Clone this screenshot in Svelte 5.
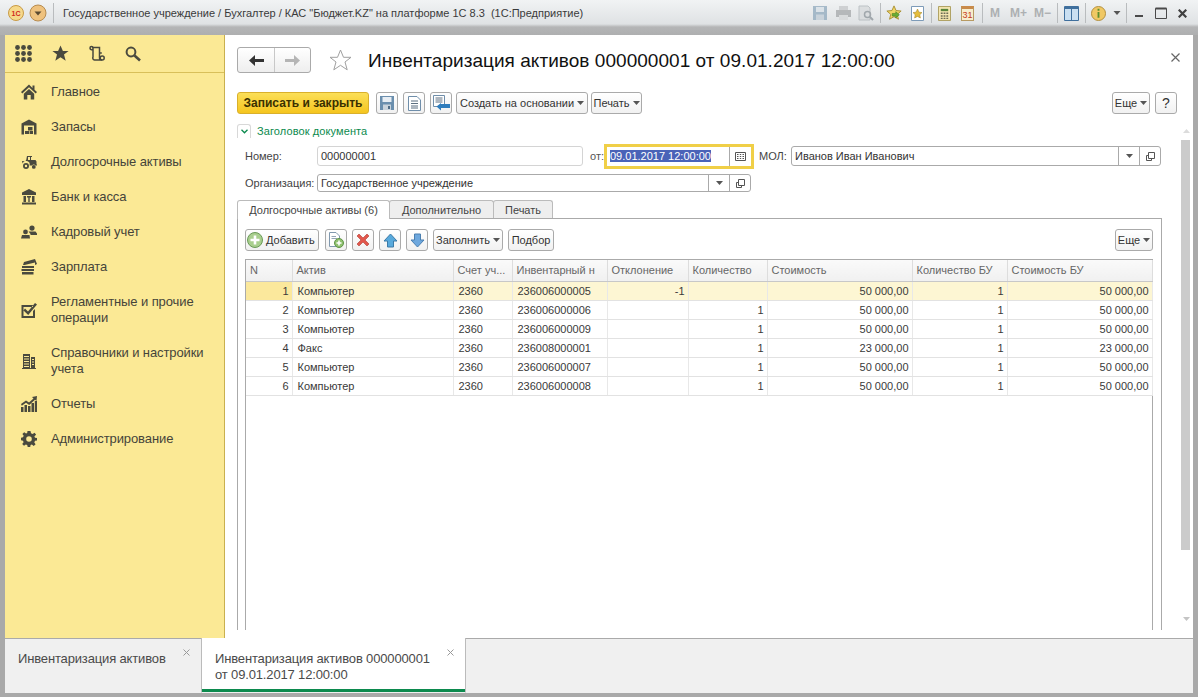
<script>
  const menu = [
    { label: 'Главное', icon: 'home' },
    { label: 'Запасы', icon: 'store' },
    { label: 'Долгосрочные активы', icon: 'tractor' },
    { label: 'Банк и касса', icon: 'bank' },
    { label: 'Кадровый учет', icon: 'people' },
    { label: 'Зарплата', icon: 'money' },
    { label: 'Регламентные и прочие операции', icon: 'check', tall: true },
    { label: 'Справочники и настройки учета', icon: 'book', tall: true },
    { label: 'Отчеты', icon: 'chart' },
    { label: 'Администрирование', icon: 'gear' }
  ];

  const paths = {
    home: 'M8 .5 0 8l1.3 1.4L8 3.2l6.7 6.2L16 8l-2.5-2.3V1.5h-2v2.4ZM8 5 2.8 9.8V15.5H6.3V11h3.4v4.5h3.5V9.8Z',
    store: 'M8 .5 .5 4.5V15.5H15.5V4.5ZM3 6.5H13V15.5H3ZM7 8H11.5V11.5H7ZM4 12H8V15H4ZM8.6 12H12V15H8.6Z',
    tractor: 'M6 2H11V3H10V6H14.5L15.5 7.5V10.5H16V11.5H14.5A2 2 0 0 0 11 11.5H8.5A3.5 3.5 0 0 0 1.6 9.5L1 7H5ZM7 3V6H9V3ZM5 9A3 3 0 1 1 5 15 3 3 0 1 1 5 9ZM5 10.8A1.2 1.2 0 1 0 5 13.2 1.2 1.2 0 1 0 5 10.8ZM12.8 11A1.9 1.9 0 1 1 12.8 14.8 1.9 1.9 0 1 1 12.8 11Z',
    bank: 'M8 0 1 3.5V6H15V3.5ZM2.5 7H5V13H2.5ZM6 7H10V8.5H8.7V13H7.3V8.5H6ZM11 7H13.5V13H11ZM1 13.5H15V15.5H1Z',
    people: 'M11 1.5A2.6 2.6 0 1 1 11 6.7 2.6 2.6 0 1 1 11 1.5ZM7.5 7.5H14.5L16 9.5V11H9.5V10ZM4.5 5.5A2.4 2.4 0 1 1 4.5 10.3 2.4 2.4 0 1 1 4.5 5.5ZM1 11H8.5L9 14.5H0Z',
    money: 'M3 3 14 0l2 5-2 1V3.5L3.5 6H2ZM1 7H13V9H1ZM.5 10H13V12H.5ZM1 13H12.5V15.5H1Z',
    check: 'M.5 3H12V5H2.5V14H12V9L14 7V16H.5ZM4 6.5 7 9.5 14 1 16 2.5 7.2 13 2.5 8.5Z',
    book: 'M2 1H9V15H2ZM10 4H14V15H10ZM3 3V4H8V3ZM3 5.5V6.5H8V5.5ZM3 8V9H8V8ZM3 10.5V11.5H8V10.5ZM3 13V14H8V13ZM11 6V7H13V6ZM11 8.5V9.5H13V8.5ZM11 11V12H13V11ZM1 15H15V16H1Z',
    chart: 'M0 11H2.5V16H0ZM3.5 9H6V16H3.5ZM7 10H9.5V16H7ZM10.5 7H13V16H10.5ZM13.8 5H16V16H13.8ZM0 8 5 4.5 8 6.5 12.5 2.5 11 1 16 0 15.5 5 14 3.8 8.2 9 5 6.8.8 9.8Z',
    gear: 'M6.5 0H9.5L10 2.3 11.6 3 13.6 1.7 15.1 3.8 13.4 5.2 14 6.8 16 7V9.4L14 9.8 13.3 11.4 14.6 13.2 12.7 15 10.9 13.6 9.6 14 9.2 16H6.7L6.2 14 4.8 13.5 3 14.8 1.2 12.9 2.6 11.2 2 9.7 0 9.3V6.8L2 6.3 2.7 4.8 1.4 3 3.2 1.2 5 2.6 6.2 2ZM8 5.2A2.8 2.8 0 1 0 8 10.8 2.8 2.8 0 1 0 8 5.2Z'
  };

  const rows = [
    ['1', 'Компьютер', '2360', '236006000005', '-1', '', '50 000,00', '1', '50 000,00'],
    ['2', 'Компьютер', '2360', '236006000006', '', '1', '50 000,00', '1', '50 000,00'],
    ['3', 'Компьютер', '2360', '236006000009', '', '1', '50 000,00', '1', '50 000,00'],
    ['4', 'Факс', '2360', '236008000001', '', '1', '23 000,00', '1', '23 000,00'],
    ['5', 'Компьютер', '2360', '236006000007', '', '1', '50 000,00', '1', '50 000,00'],
    ['6', 'Компьютер', '2360', '236006000008', '', '1', '50 000,00', '1', '50 000,00']
  ];

  const columns = [
    { title: 'N', width: 46 },
    { title: 'Актив', width: 161 },
    { title: 'Счет уч...', width: 59 },
    { title: 'Инвентарный н', width: 95 },
    { title: 'Отклонение', width: 81 },
    { title: 'Количество', width: 79 },
    { title: 'Стоимость', width: 145 },
    { title: 'Количество БУ', width: 95 },
    { title: 'Стоимость БУ', width: 145 }
  ];

  const rightAligned = [0, 4, 5, 6, 7, 8];
</script>

{#snippet caret()}
  <svg class="caret" width="7" height="4" viewBox="0 0 7 4"><path d="M0 0H7L3.5 4Z" fill="#555" /></svg>
{/snippet}

{#snippet openIcon()}
  <svg width="11" height="11" viewBox="0 0 11 11" fill="none" stroke="#555"><path d="M3.5 1.5H9.5V7.5H3.5ZM3.5 4.5H1.5V9.5H6.5V7.5" /></svg>
{/snippet}

{#snippet floppy()}
  <svg width="14" height="14" viewBox="0 0 14 14"><path d="M0 0H14V14H0Z" fill="#6b8fae" /><path d="M2.5 1H11.5V6H2.5Z" fill="#e8eef4" /><path d="M3 8.5H11V14H3Z" fill="#c9d3dc" /><path d="M8 10H10V13H8Z" fill="#4f6c86" /></svg>
{/snippet}

<div class="window">
  <header class="titlebar">
    <svg class="logo" width="16" height="16" viewBox="0 0 16 16">
      <circle cx="8" cy="8" r="7.5" fill="#f6d98a" stroke="#c89a45" />
      <text x="8" y="11" text-anchor="middle" class="logo-text">1С</text>
    </svg>
    <svg class="logo2" width="18" height="18" viewBox="0 0 18 18">
      <circle cx="9" cy="9" r="8" fill="#efc27e" stroke="#b78c50" />
      <path d="M5.5 7.5H12.5L9 11.5Z" fill="#5b4a30" />
    </svg>
    <span class="sep head-sep"></span>
    <span class="app-title">Государственное учреждение / Бухгалтер / КАС "Бюджет.KZ" на платформе 1С 8.3  (1С:Предприятие)</span>
    <div class="title-tools">
      <div class="faded">
        <svg width="16" height="16" viewBox="0 0 16 16"><path d="M1 1H15V15H1Z" fill="#8fa9bd" /><path d="M4 2H12V7H4Z" fill="#d7e0e7" /><path d="M4 9.5H12V15H4Z" fill="#c0ccd6" /></svg>
        <svg class="ml7" width="17" height="16" viewBox="0 0 17 16"><path d="M4 1H13V5H4Z" fill="#c5c7c9" /><path d="M1 5H16V12H1Z" fill="#a5a8aa" /><path d="M4 10H13V15H4Z" fill="#d5d7d8" /></svg>
        <svg class="ml6" width="16" height="16" viewBox="0 0 16 16"><path d="M1 1H10L12 3V15H1Z" fill="#d7dadc" stroke="#aeb4b8" /><circle cx="9.5" cy="9.5" r="3" fill="none" stroke="#8a9298" stroke-width="1.5" /><path d="M12 12 15 15" stroke="#8a9298" stroke-width="2" /></svg>
      </div>
      <span class="sep ml6"></span>
      <svg class="ml5" width="16" height="16" viewBox="0 0 18 18"><path d="M9 1 11.3 6.2 17 6.8 12.7 10.5 14 16 9 13.1 4 16 5.3 10.5 1 6.8 6.7 6.2Z" fill="#f1d565" stroke="#a68c2c" /><path d="M7 9.5H11V7.5L15 11 11 14.5V12.5H7Z" fill="#69ad35" stroke="#3e7a1d" stroke-width=".6" /></svg>
      <svg class="ml9" width="13" height="15" viewBox="0 0 13 15"><path d="M.5.5H12.5V14.5H.5Z" fill="#fff" stroke="#7d9bb8" /><path d="M6.5 3 8 6.2 11 6.6 8.8 8.7 9.4 12 6.5 10.4 3.6 12 4.2 8.7 2 6.6 5 6.2Z" fill="#e5bd3c" stroke="#9c7f22" stroke-width=".5" /></svg>
      <span class="sep ml7"></span>
      <svg class="ml6" width="13" height="15" viewBox="0 0 14 16"><path d="M.5.5H13.5V15.5H.5Z" fill="#f4e6b0" stroke="#a99a59" /><path d="M3 3H11V5.5H3Z" fill="#58853c" /><path d="M3 7H5V8.5H3ZM6 7H8V8.5H6ZM9 7H11V8.5H9ZM3 10H5V11.5H3ZM6 10H8V11.5H6ZM9 10H11V11.5H9ZM3 12.5H5V14H3ZM6 12.5H8V14H6ZM9 12.5H11V14H9Z" fill="#6b6b55" /></svg>
      <div class="cal ml10">31</div>
      <span class="sep ml8"></span>
      <span class="mem m1 ml7">M</span>
      <span class="mem m2 ml10">M+</span>
      <span class="mem m3 ml7">M−</span>
      <span class="sep ml6"></span>
      <svg class="ml6" width="15" height="15" viewBox="0 0 15 15"><path d="M.5.5H14.5V14.5H.5Z" fill="#fff" stroke="#3f6f9d" /><path d="M1 1H14V3H1Z" fill="#3f6f9d" /><path d="M7.5 3V14" stroke="#3f6f9d" /><path d="M1 3H7V14H1ZM8 3H14V14H8Z" fill="#c9dff1" /></svg>
      <span class="sep ml6"></span>
      <svg class="ml5" width="15" height="15" viewBox="0 0 16 16"><circle cx="8" cy="8" r="7.5" fill="#f0c864" stroke="#b08c3a" /><path d="M7 3H9V5H7ZM7 6.5H9V12.5H7Z" fill="#5c8f2f" /></svg>
      <svg class="ml7 drop" width="8" height="4" viewBox="0 0 7 4"><path d="M0 0H7L3.5 4Z" fill="#555" /></svg>
      <span class="sep ml5"></span>
      <svg class="ml8" width="8" height="12" viewBox="0 0 8 12"><path d="M0 8H8V10H0Z" fill="#4a4a4a" /></svg>
      <svg class="ml12" width="12" height="12" viewBox="0 0 12 12" fill="none" stroke="#4a4a4a"><path d="M.5 1.5H11.5V11.5H.5Z" /><path d="M.5 1.5H11.5" stroke-width="2" /></svg>
      <svg class="ml11" width="9" height="9" viewBox="0 0 9 9"><path d="M.7.7 8.3 8.3M8.3.7.7 8.3" stroke="#404040" stroke-width="2.2" /></svg>
    </div>
  </header>

  <div class="body">
    <aside class="sidebar">
      <div class="quick">
        <svg width="17" height="17" viewBox="0 0 17 17" fill="#4a4a3e">
          {#each [2.5, 8.5, 14.5] as y}
            {#each [2.5, 8.5, 14.5] as x}
              <circle cx={x} cy={y} r="2.4" />
            {/each}
          {/each}
        </svg>
        <svg width="17" height="17" viewBox="0 0 17 17"><path d="M8.5 .5 10.9 6H16.6L12 9.6 13.7 15.8 8.5 12.2 3.3 15.8 5 9.6.4 6H6.1Z" fill="#4a4a3e" /></svg>
        <svg width="16" height="17" viewBox="0 0 16 17" fill="none" stroke="#4a4a3e" stroke-width="1.5"><path d="M3 2.5H10.5V12.5A2.2 2.2 0 0 0 13 15H5.5A2 2 0 0 1 4 12V3A1.5 1.5 0 0 0 1 3C1 4.5 2 5 4 5M10.5 8H12.8" /><circle cx="13.2" cy="13" r="2" /></svg>
        <svg width="16" height="16" viewBox="0 0 16 16" fill="none" stroke="#4a4a3e"><circle cx="6" cy="6" r="4.4" stroke-width="2" /><path d="M9.5 9.5 15 14.5" stroke-width="2.6" /></svg>
      </div>
      <nav>
        {#each menu as item}
          <div class="menu-item" class:tall={item.tall}>
            <svg width="16" height="16" viewBox="0 0 16 16"><path d={paths[item.icon]} fill="#4a4a3e" fill-rule="evenodd" /></svg>
            <span>{item.label}</span>
          </div>
        {/each}
      </nav>
    </aside>

    <main class="main">
      <div class="content">
        <div class="head">
          <div class="nav-btns">
            <button class="nav-btn">
              <svg width="15" height="11" viewBox="0 0 15 11"><path d="M6 0V4H15V7H6V11L0 5.5Z" fill="#333" /></svg>
            </button>
            <button class="nav-btn">
              <svg width="15" height="11" viewBox="0 0 15 11"><path d="M9 0V4H0V7H9V11L15 5.5Z" fill="#b5b5b5" /></svg>
            </button>
          </div>
          <svg class="fav" width="23" height="22" viewBox="0 0 23 22"><path d="M11.5 1 14.5 8.3H22L16 13 18.2 20.8 11.5 16.3 4.8 20.8 7 13 1 8.3H8.5Z" fill="none" stroke="#a0a0a0" /></svg>
          <h1>Инвентаризация активов 000000001 от 09.01.2017 12:00:00</h1>
          <svg class="close" width="9" height="9" viewBox="0 0 9 9"><path d="M.5.5 8.5 8.5M8.5.5.5 8.5" stroke="#666" stroke-width="1.2" /></svg>
        </div>

        <div class="cmd-bar">
          <button class="btn primary">Записать и закрыть</button>
          <button class="btn icon first">
            {@render floppy()}
          </button>
          <button class="btn icon">
            <svg width="13" height="15" viewBox="0 0 13 15"><path d="M.5.5H9L12.5 4V14.5H.5Z" fill="#fff" stroke="#6f8eaa" /><path d="M3 5H10M3 7.5H10M3 10H10M3 12H10" stroke="#5d6f80" /></svg>
          </button>
          <button class="btn icon">
            <svg width="17" height="16" viewBox="0 0 17 16"><path d="M.5.5H11.5V11.5H.5Z" fill="#fff" stroke="#6f8eaa" /><path d="M2.5 3H9.5M2.5 5H9.5M2.5 7H9.5" stroke="#5d6f80" /><path d="M17 9V13H8V15.5L3.5 11.5 8 8V9Z" fill="#2f7dbd" /></svg>
          </button>
          <button class="btn create">Создать на основании {@render caret()}</button>
          <button class="btn print">Печать {@render caret()}</button>
          <button class="btn more">Еще {@render caret()}</button>
          <button class="btn help">?</button>
        </div>

        <div class="group-title">
          <span class="toggle"><svg width="7" height="5" viewBox="0 0 7 5" fill="none"><path d="M.5.8 3.5 3.8 6.5.8" stroke="#0c8a4e" stroke-width="1.3" /></svg></span>
          Заголовок документа
        </div>

        <div class="row first-row">
          <label class="lbl">Номер:</label>
          <div class="input number">000000001</div>
          <label class="lbl-from">от:</label>
          <div class="input date">
            <span class="text"><span class="selected">09.01.2017 12:00:00</span></span>
            <span class="fbtn">
              <svg width="11" height="9" viewBox="0 0 11 9"><path d="M.5.5H10.5V8.5H.5Z" fill="none" stroke="#555" /><path d="M2 2.5H3.5M4.8 2.5H6.2M7.5 2.5H9M2 4.5H3.5M4.8 4.5H6.2M7.5 4.5H9M2 6.5H3.5M4.8 6.5H6.2M7.5 6.5H9" stroke="#555" /></svg>
            </span>
          </div>
          <label class="lbl-mol">МОЛ:</label>
          <div class="input mol">
            <span class="text">Иванов Иван Иванович</span>
            <span class="fbtn">{@render caret()}</span>
            <span class="fbtn">{@render openIcon()}</span>
          </div>
        </div>

        <div class="row">
          <label class="lbl">Организация:</label>
          <div class="input org">
            <span class="text">Государственное учреждение</span>
            <span class="fbtn">{@render caret()}</span>
            <span class="fbtn">{@render openIcon()}</span>
          </div>
        </div>

        <div class="tabs">
          <div class="tab active">Долгосрочные активы (6)</div>
          <div class="tab w2">Дополнительно</div>
          <div class="tab w3">Печать</div>
        </div>

        <section class="panel">
          <div class="toolbar">
            <button class="btn add">
              <svg width="16" height="16" viewBox="0 0 16 16"><circle cx="8" cy="8" r="7.5" fill="#a9cf8e" stroke="#6b9a58" /><path d="M6.7 3.5H9.3V6.7H12.5V9.3H9.3V12.5H6.7V9.3H3.5V6.7H6.7Z" fill="#fff" /></svg>
              Добавить
            </button>
            <button class="btn icon t1">
              <svg width="16" height="16" viewBox="0 0 16 16"><path d="M1.5.5H8L11.5 4V14.5H1.5Z" fill="#fff" stroke="#8098ae" /><path d="M3.5 4.5H8M3.5 6.5H9" stroke="#93a5b6" /><circle cx="11" cy="11" r="4.5" fill="#8fc06f" stroke="#5f9447" /><path d="M10.2 8.5H11.8V10.2H13.5V11.8H11.8V13.5H10.2V11.8H8.5V10.2H10.2Z" fill="#fff" /></svg>
            </button>
            <button class="btn icon">
              <svg width="14" height="14" viewBox="0 0 14 14"><path d="M1 3 3 1 7 5 11 1 13 3 9 7 13 11 11 13 7 9 3 13 1 11 5 7Z" fill="#e2574c" stroke="#b13a30" stroke-width=".6" /></svg>
            </button>
            <button class="btn icon">
              <svg width="15" height="15" viewBox="0 0 15 15"><path d="M7.5 1 14 8H10.5V14H4.5V8H1Z" fill="#58a9dc" stroke="#3c7ba8" /></svg>
            </button>
            <button class="btn icon">
              <svg width="15" height="15" viewBox="0 0 15 15"><path d="M7.5 14 14 7H10.5V1H4.5V7H1Z" fill="#6ea8de" stroke="#4a7fb0" /></svg>
            </button>
            <button class="btn fill">Заполнить {@render caret()}</button>
            <button class="btn pick">Подбор</button>
            <button class="btn more2">Еще {@render caret()}</button>
          </div>

          <div class="grid">
            <table>
              <colgroup>
                {#each columns as col}
                  <col style="width: {col.width}px" />
                {/each}
              </colgroup>
              <thead>
                <tr>
                  {#each columns as col}
                    <th>{col.title}</th>
                  {/each}
                </tr>
              </thead>
              <tbody>
                {#each rows as row, r}
                  <tr class:current={r === 0}>
                    {#each row as cell, c}
                      <td class:right={rightAligned.includes(c)}>{cell}</td>
                    {/each}
                  </tr>
                {/each}
              </tbody>
            </table>
          </div>
        </section>
      </div>

      <div class="scroll">
        <svg class="arr-up" width="7" height="4" viewBox="0 0 7 4"><path d="M0 4H7L3.5 0Z" fill="#dcdcdc" /></svg>
        <div class="thumb"></div>
        <svg class="arr-down" width="7" height="4" viewBox="0 0 7 4"><path d="M0 0H7L3.5 4Z" fill="#c4c4c4" /></svg>
      </div>
    </main>
  </div>

  <footer class="open-tabs">
    <div class="otab">
      <span>Инвентаризация активов</span>
      <svg width="7" height="7" viewBox="0 0 7 7"><path d="M.5.5 6.5 6.5M6.5.5.5 6.5" stroke="#999" /></svg>
    </div>
    <div class="otab on">
      <span>Инвентаризация активов 000000001<br />от 09.01.2017 12:00:00</span>
      <svg width="7" height="7" viewBox="0 0 7 7"><path d="M.5.5 6.5 6.5M6.5.5.5 6.5" stroke="#999" /></svg>
    </div>
  </footer>
</div>

<style>
  :global(body) {
    margin: 0;
    background: #a8a8a8;
    font-family: "Liberation Sans", Arial, sans-serif;
    color: #333;
  }

  button {
    font: inherit;
    color: inherit;
    padding: 0;
  }

  .window {
    width: 1198px;
    height: 697px;
    box-sizing: border-box;
    padding: 0 5px 4px;
    display: flex;
    flex-direction: column;
    overflow: hidden;
    background: #a9a9a9;
  }

  .titlebar {
    height: 35px;
    margin: 0 -5px;
    padding: 0 11px 9px 8px;
    box-sizing: border-box;
    display: flex;
    align-items: center;
    background: linear-gradient(#f1f3f4 0, #dfe2e4 24px, #b4b5b6 27px, #aeafb0 35px);
    flex: none;
  }

  .logo {
    margin-right: 5px;
    flex: none;
  }

  .logo2 { flex: none; }

  .logo-text {
    font: bold 7px "Liberation Sans", sans-serif;
    fill: #d0281c;
  }

  .sep {
    width: 1px;
    height: 20px;
    background: #b9bcbe;
    flex: none;
  }

  .head-sep {
    margin: 0 9px 0 6px;
  }

  .app-title {
    font-size: 11px;
    color: #3a3a3a;
    white-space: pre;
  }

  .title-tools {
    margin-left: auto;
    display: flex;
    align-items: center;
  }

  .faded {
    display: flex;
    align-items: center;
    opacity: 0.75;
  }

  .ml5 { margin-left: 5px; }
  .ml6 { margin-left: 6px; }
  .ml7 { margin-left: 7px; }
  .ml8 { margin-left: 8px; }
  .ml9 { margin-left: 9px; }
  .ml10 { margin-left: 10px; }
  .ml11 { margin-left: 11px; }
  .ml12 { margin-left: 12px; }

  .cal {
    width: 13px;
    height: 15px;
    border: 1px solid #b79a62;
    border-top: 3px solid #c98a4a;
    box-sizing: border-box;
    background: #f7edcd;
    color: #c53c22;
    font-size: 9px;
    line-height: 12px;
    text-align: center;
  }

  .mem {
    font-size: 12px;
    font-weight: bold;
    color: #adb0b2;
  }

  .body {
    flex: 1;
    min-height: 0;
    display: flex;
  }

  .sidebar {
    width: 220px;
    flex: none;
    box-sizing: border-box;
    background: #fbe995;
    border-right: 1px solid #c9b04f;
  }

  .quick {
    height: 38px;
    box-sizing: border-box;
    border-bottom: 1px solid #d8bf5a;
    padding-left: 10px;
    display: flex;
    align-items: center;
    gap: 20px;
  }

  nav { padding-top: 1px; }

  .menu-item {
    height: 35px;
    display: flex;
    align-items: center;
    padding-left: 16px;
    gap: 14px;
    font-size: 13px;
    line-height: 16px;
    letter-spacing: -0.1px;
    color: #45443a;
  }

  .menu-item svg { flex: none; }

  .menu-item.tall { height: 51px; }

  .menu-item span { width: 160px; }

  .main {
    flex: 1;
    min-width: 0;
    display: flex;
    background: #fff;
  }

  .content {
    width: 956px;
    flex: none;
    height: 595px;
    overflow: hidden;
    padding-left: 12px;
    box-sizing: border-box;
  }

  .head {
    height: 26px;
    margin-top: 12px;
    display: flex;
    align-items: center;
  }

  .nav-btns {
    display: flex;
    border: 1px solid #aaa;
    border-radius: 3px;
    height: 24px;
    background: linear-gradient(#fff, #eee);
  }

  .nav-btn {
    width: 36px;
    border: 0;
    background: none;
    display: flex;
    align-items: center;
    justify-content: center;
  }

  .nav-btn + .nav-btn { border-left: 1px solid #c8c8c8; }

  .fav {
    margin: 0 16px 0 18px;
  }

  h1 {
    margin: 0;
    padding-top: 2px;
    font-size: 19px;
    font-weight: normal;
    letter-spacing: 0.04px;
    color: #111;
    white-space: nowrap;
  }

  .close {
    margin-left: auto;
    margin-top: -6px;
    margin-right: 1px;
    flex: none;
  }

  .cmd-bar {
    margin-top: 19px;
    height: 22px;
    display: flex;
    width: 940px;
  }

  .btn {
    height: 22px;
    box-sizing: border-box;
    border: 1px solid #aaa;
    border-radius: 3px;
    background: linear-gradient(#fff, #f1f1f1);
    font-size: 11px;
    color: #333;
    display: flex;
    align-items: center;
    justify-content: center;
    gap: 3px;
    white-space: nowrap;
    flex: none;
  }

  .btn.icon {
    width: 22px;
    margin-left: 5px;
  }

  .btn.primary {
    width: 132px;
    font-weight: bold;
    font-size: 12px;
    border-color: #d9b02c;
    background: linear-gradient(#fbdf58, #f5c51f);
    color: #3a3000;
  }

  .btn.first { margin-left: 7px; }

  .btn.create { width: 132px; margin-left: 4px; }

  .btn.print { width: 51px; margin-left: 3px; }

  .btn.more { width: 38px; margin-left: auto; }

  .btn.help { width: 22px; margin-left: 5px; font-size: 14px; }

  .group-title {
    margin-top: 9px;
    height: 16px;
    display: flex;
    align-items: center;
    gap: 6px;
    font-size: 11px;
    letter-spacing: 0.1px;
    color: #0c8a4e;
  }

  .toggle {
    width: 14px;
    height: 14px;
    border: 1px solid #d8d8d8;
    border-bottom: 0;
    border-radius: 3px 3px 0 0;
    box-sizing: border-box;
    display: flex;
    align-items: center;
    justify-content: center;
  }

  .row {
    display: flex;
    align-items: center;
    height: 18px;
    margin-top: 8px;
    padding-left: 8px;
    font-size: 11px;
  }

  .first-row {
    margin-top: 7px;
    height: 20px;
  }

  .lbl {
    width: 72px;
    flex: none;
    color: #444;
    white-space: nowrap;
  }

  .input {
    height: 100%;
    box-sizing: border-box;
    border: 1px solid #aaa;
    border-radius: 3px;
    display: flex;
    align-items: center;
    color: #333;
    background: #fff;
  }

  .number {
    width: 266px;
    padding-left: 3px;
    border-color: #d4d4d4;
  }

  .lbl-from {
    margin-left: 7px;
    width: 14px;
    color: #555;
  }

  .date {
    width: 150px;
    height: 25px;
    border: 3px solid #f0cf47;
    border-radius: 0;
  }

  .date .fbtn {
    height: 19px;
    width: 22px;
  }

  .selected {
    background: #4a63b8;
    color: #fff;
  }

  .text { flex: 1; padding-left: 3px; }

  .fbtn {
    width: 21px;
    height: 100%;
    box-sizing: border-box;
    border-left: 1px solid #aaa;
    display: flex;
    align-items: center;
    justify-content: center;
    flex: none;
  }

  .lbl-mol {
    margin-left: 5px;
    width: 32px;
    color: #444;
  }

  .mol { width: 370px; }

  .org { width: 434px; }

  .tabs {
    display: flex;
    margin-top: 8px;
    height: 18px;
    font-size: 11px;
    position: relative;
    z-index: 1;
  }

  .tab {
    box-sizing: border-box;
    border: 1px solid #bbb;
    border-bottom: 0;
    border-radius: 3px 3px 0 0;
    background: #eee;
    width: 104px;
    text-align: center;
    line-height: 18px;
    color: #444;
    margin-left: -1px;
  }

  .tab.active {
    width: 153px;
    margin-left: 0;
    height: 19px;
    background: #fff;
  }

  .tab.w2 { width: 105px; }

  .tab.w3 { width: 60px; }

  .panel {
    width: 925px;
    box-sizing: border-box;
    border: 1px solid #aaa;
    height: 500px;
    padding: 10px 8px 0 7px;
  }

  .toolbar {
    display: flex;
    height: 22px;
  }

  .btn.add { width: 74px; gap: 3px; justify-content: flex-start; padding-left: 1px; }

  .btn.t1 { margin-left: 6px; }

  .btn.fill { width: 70px; margin-left: 5px; }

  .btn.pick { width: 46px; margin-left: 5px; }

  .btn.more2 { width: 38px; margin-left: auto; }

  .grid {
    margin-top: 8px;
    width: 908px;
    height: 400px;
    box-sizing: border-box;
    border: 1px solid #aaa;
    border-bottom: 0;
  }

  table {
    width: 906px;
    border-collapse: collapse;
    table-layout: fixed;
    font-size: 11px;
    color: #3a3a3a;
  }

  th {
    height: 21px;
    padding: 0 4px;
    box-sizing: border-box;
    font-weight: normal;
    text-align: left;
    color: #666;
    background: linear-gradient(#fafafa, #f0f0f0);
    border-right: 1px solid #ddd;
    border-bottom: 1px solid #c8c8c8;
    overflow: hidden;
    white-space: nowrap;
  }

  td {
    height: 19px;
    padding: 0 3px 0 5px;
    box-sizing: border-box;
    border-right: 1px solid #e8e8e8;
    border-bottom: 1px solid #e2e2e2;
    white-space: nowrap;
    overflow: hidden;
  }

  td.right { text-align: right; }

  tr.current td { background: #fdf6d3; }

  tr.current td:first-child { background: #fbe89c; }

  .scroll {
    flex: 1;
    display: flex;
    flex-direction: column;
    align-items: flex-start;
  }

  .arr-up { margin: 94px 0 0 2px; }

  .thumb {
    width: 9px;
    height: 410px;
    margin-top: 7px;
    background: #cbcbcb;
  }

  .arr-down { margin: 67px 0 0 2px; }

  .open-tabs {
    height: 55px;
    flex: none;
    display: flex;
    background: #f0f0f0;
    border-top: 1px solid #aaa;
    box-sizing: border-box;
    font-size: 13px;
    letter-spacing: -0.15px;
    line-height: 16px;
    color: #4a4a4a;
  }

  .otab {
    width: 196px;
    box-sizing: border-box;
    padding: 12px 0 0 13px;
    display: flex;
    align-items: flex-start;
    gap: 17px;
  }

  .otab svg { margin-top: -2px; flex: none; }

  .otab.on {
    width: 265px;
    background: #fff;
    border-left: 1px solid #bbb;
    border-right: 1px solid #bbb;
    border-bottom: 1px solid #f0f0f0;
    box-shadow: inset 0 -3px 0 #0c8a4e;
    margin-top: -1px;
    padding-top: 13px;
  }
</style>
